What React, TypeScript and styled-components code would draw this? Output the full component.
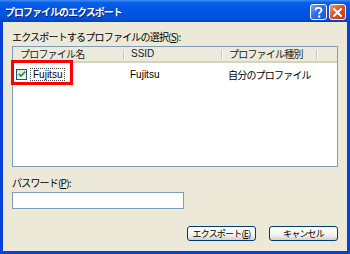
import React from 'react'
import styled, { createGlobalStyle } from 'styled-components'

const GlobalStyle = createGlobalStyle`
    html, body {
        margin: 0;
        padding: 0;
        background: #ffffff;
    }
    body {
        font-family: "Liberation Sans", "Noto Sans CJK JP", sans-serif;
        font-size: 10px;
        color: #000;
    }
`

const columns = [
    { title: 'プロファイル名', width: 111, latin: false },
    { title: 'SSID', width: 98, latin: true },
    { title: 'プロファイル種別', width: 95, latin: false },
]

const App = () => {
    return (
        <>
            <GlobalStyle />
            <Window>
                <TitleBar>
                    <Title>プロファイルのエクスポート</Title>
                    <TitleButtons>
                        <CaptionButton>
                            <svg width="9" height="11" viewBox="0 0 9 11">
                                <path d="M1.5 3.2 C1.5 1.4 3 0.8 4.5 0.8 C6.3 0.8 7.5 1.8 7.5 3.2 C7.5 4.8 5.2 5 5.2 6.8 L5.2 7.2" fill="none" stroke="#fff" strokeWidth="1.9" />
                                <rect x="4.1" y="8.5" width="2.1" height="2" fill="#fff" />
                            </svg>
                        </CaptionButton>
                        <CaptionButton close>
                            <svg width="9" height="9" viewBox="0 0 9 9">
                                <path d="M1 1 L8 8 M8 1 L1 8" stroke="#fff" strokeWidth="2" strokeLinecap="square" />
                            </svg>
                        </CaptionButton>
                    </TitleButtons>
                </TitleBar>
                <Client>
                    <Label>
                        エクスポートするプロファイルの選択(<u>S</u>):
                    </Label>
                    <ListView>
                        <ListHeader>
                            {columns.map((c) => (
                                <HeaderCell key={c.title} latin={c.latin} style={{ width: c.width }}>
                                    {c.title}
                                </HeaderCell>
                            ))}
                        </ListHeader>
                        <ListRow>
                            <Cell style={{ width: columns[0].width }}>
                                <CheckBox>
                                    <svg width="8" height="8" viewBox="0 0 8 8">
                                        <path d="M0.8 3.8 L3 6 L7.2 1.6" fill="none" stroke="#21a121" strokeWidth="1.8" />
                                    </svg>
                                </CheckBox>
                                <FocusText>Fujitsu</FocusText>
                            </Cell>
                            <Cell latin style={{ width: columns[1].width }}>
                                Fujitsu
                            </Cell>
                            <Cell style={{ width: columns[2].width }}>自分のプロファイル</Cell>
                        </ListRow>
                        <Highlight />
                    </ListView>
                    <PasswordLabel>
                        パスワード(<u>P</u>):
                    </PasswordLabel>
                    <PasswordInput />
                    <ButtonRow>
                        <DialogButton>
                            エクスポート(<u>E</u>)
                        </DialogButton>
                        <DialogButton>キャンセル</DialogButton>
                    </ButtonRow>
                </Client>
            </Window>
        </>
    )
}

export default App

const Window = styled.div`
    width: 350px;
    height: 254px;
    background: #0841d8;
    display: flex;
    flex-direction: column;
    box-sizing: border-box;
`

const TitleBar = styled.div`
    height: 22px;
    flex: none;
    display: flex;
    align-items: center;
    justify-content: space-between;
    padding: 0 4px 0 5px;
    background: linear-gradient(
        to bottom,
        #3d8cf7 0%,
        #0a5fe8 12%,
        #0056e3 45%,
        #0052dc 80%,
        #0043c2 100%
    );
`

const Title = styled.div`
    color: #fff;
    font-family: "Noto Sans CJK JP", sans-serif;
    font-weight: bold;
    font-size: 10px;
    letter-spacing: -1px;
    text-shadow: 1px 1px 0 #0a1e7a;
`

const TitleButtons = styled.div`
    display: flex;
    gap: 2px;
    padding-top: 2px;
`

const CaptionButton = styled.div<{ close?: boolean }>`
    width: 15px;
    height: 14px;
    border: 1px solid #fff;
    border-radius: 3px;
    display: flex;
    align-items: center;
    justify-content: center;
    background: ${(p) =>
        p.close
            ? 'linear-gradient(to bottom right, #f09a7c, #e0512b 45%, #c93510)'
            : 'linear-gradient(to bottom right, #7aa8f8, #2d6cf0 45%, #1a52d6)'};
`

const Client = styled.div`
    flex: 1;
    margin: 0 3px 3px 3px;
    background: #ece9d8;
    padding: 10px 10px 0 9px;
    display: flex;
    flex-direction: column;
    font-family: "Noto Sans CJK JP", sans-serif;
    letter-spacing: -0.8px;
`

const Label = styled.div`
    height: 10px;
    line-height: 10px;
    font-size: 10px;
    color: #000;
`

const ListView = styled.div`
    position: relative;
    margin-top: 4px;
    width: 326px;
    height: 121px;
    box-sizing: border-box;
    border: 1px solid #7f9db9;
    background: #fff;
`

const ListHeader = styled.div`
    display: flex;
    height: 16px;
    box-sizing: border-box;
    background: #ebeadb;
    border-bottom: 2px solid #d6d2c2;
`

const HeaderCell = styled.div<{ latin?: boolean }>`
    box-sizing: border-box;
    height: 14px;
    line-height: 14px;
    padding-left: 7px;
    position: relative;
    color: #222;
    ${(p) => p.latin && 'font-family: "Liberation Sans", sans-serif; letter-spacing: 0;'}
    &::after {
        content: '';
        position: absolute;
        right: 0;
        top: 3px;
        bottom: 2px;
        width: 1px;
        background: #c7c5b2;
        box-shadow: 1px 0 0 #fff;
    }
`

const ListRow = styled.div`
    display: flex;
    height: 16px;
    margin-top: 3px;
    align-items: center;
`

const Cell = styled.div<{ latin?: boolean }>`
    box-sizing: border-box;
    display: flex;
    align-items: center;
    padding-left: 6px;
    height: 16px;
    ${(p) => p.latin && 'font-family: "Liberation Sans", sans-serif; letter-spacing: 0;'}
    &:first-child {
        padding-left: 3px;
    }
`

const CheckBox = styled.div`
    width: 11px;
    height: 11px;
    box-sizing: border-box;
    border: 1px solid #1c5180;
    background: linear-gradient(to bottom right, #dcdcd7, #fff);
    display: flex;
    align-items: center;
    justify-content: center;
    margin-right: 4px;
`

const FocusText = styled.span`
    font-family: "Liberation Sans", sans-serif;
    letter-spacing: 0;
    padding: 0 2px;
    height: 11px;
    line-height: 11px;
    outline: 1px dotted #444;
`

const Highlight = styled.div`
    position: absolute;
    left: -2px;
    top: 13px;
    width: 62px;
    height: 25px;
    box-sizing: border-box;
    border: 3px solid #ff0000;
`

const PasswordLabel = styled(Label)`
    margin-top: 11px;
`

const PasswordInput = styled.div`
    margin-top: 4px;
    width: 172px;
    height: 17px;
    box-sizing: border-box;
    border: 1px solid #7f9db9;
    background: #fff;
`

const ButtonRow = styled.div`
    display: flex;
    justify-content: flex-end;
    gap: 13px;
    margin-top: 17px;
    width: 326px;
`

const DialogButton = styled.div`
    width: 69px;
    height: 15px;
    box-sizing: border-box;
    border: 1px solid #003c74;
    border-radius: 3px;
    background: linear-gradient(to bottom, #ffffff 0%, #f3f3ef 60%, #d6d0c5 100%);
    display: flex;
    align-items: center;
    justify-content: center;
    font-size: 9px;
`
